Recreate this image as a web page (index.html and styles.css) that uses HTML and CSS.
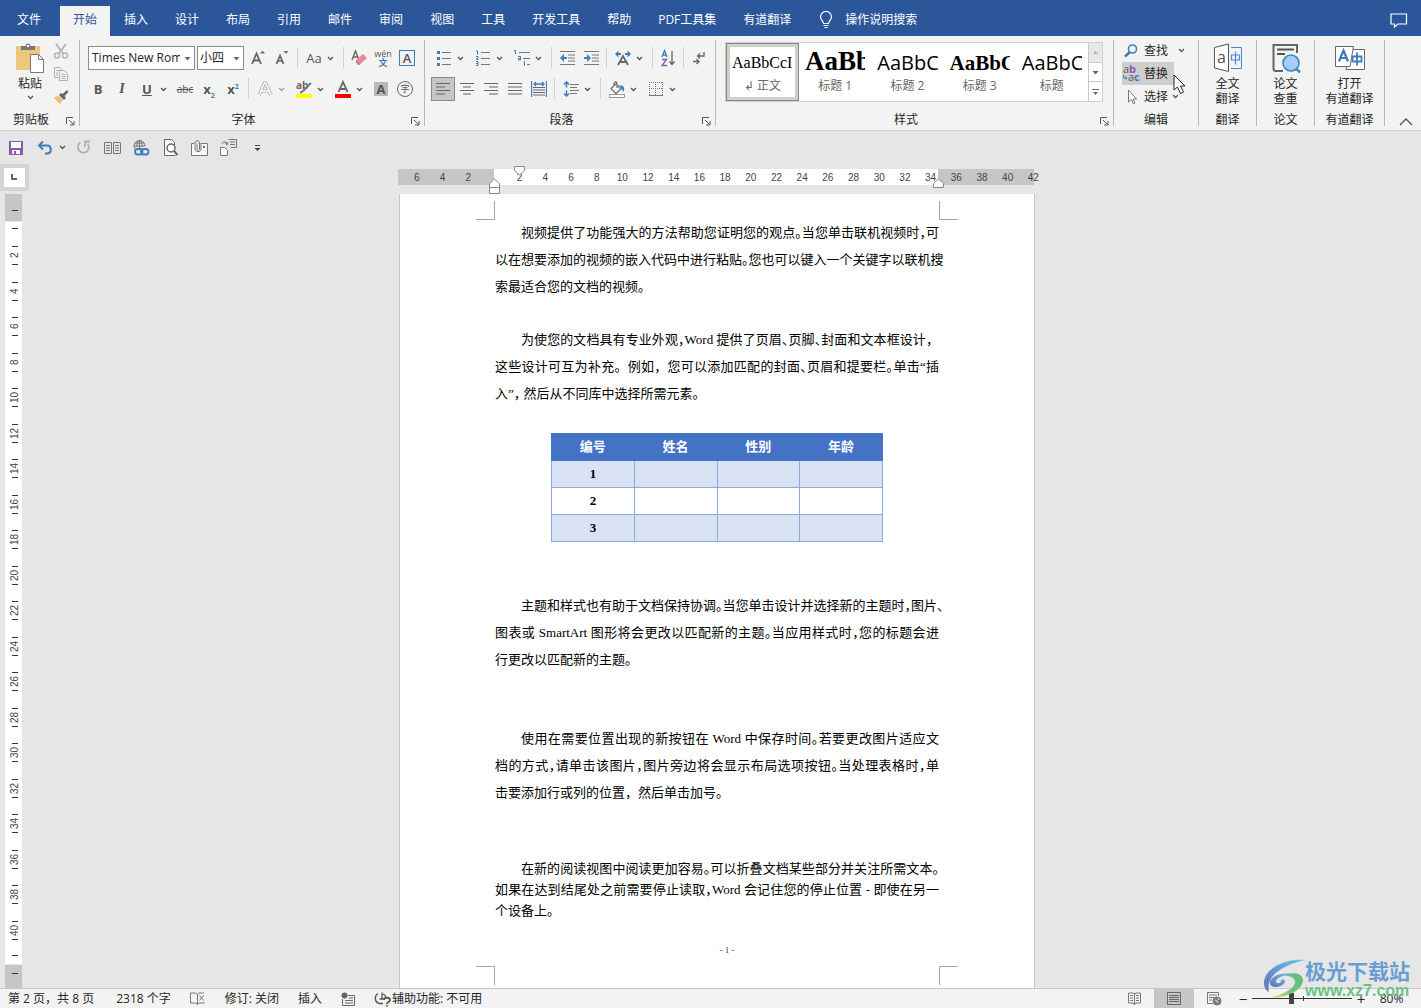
FILE: index.html
```html
<!DOCTYPE html>
<html lang="zh-CN">
<head>
<meta charset="utf-8">
<meta name="viewport" content="width=device-width, initial-scale=1">
<title>文档 - Word</title>
<link rel="stylesheet" href="styles.css">
</head>
<body>
<svg class="defs" aria-hidden="true">
  <symbol id="chev" viewBox="0 0 7 7"><path d="M1 2l2.500 2.500L6 2" fill="none" stroke="#555" stroke-width="1.300"/></symbol>
  <symbol id="launch" viewBox="0 0 9 9"><path d="M.5 7V.5H7M3 3l4 4M8 4v4H4" fill="none" stroke="#555"/></symbol>
  <symbol id="drop" viewBox="0 0 7 7"><path d="M.5 2h6l-3 3.500z" fill="#666"/></symbol>
</svg>

<header class="tabs">
  <nav class="tab-list">
    <button class="tab file">文件</button>
    <button class="tab active">开始</button>
    <button class="tab">插入</button>
    <button class="tab">设计</button>
    <button class="tab">布局</button>
    <button class="tab">引用</button>
    <button class="tab">邮件</button>
    <button class="tab">审阅</button>
    <button class="tab">视图</button>
    <button class="tab">工具</button>
    <button class="tab">开发工具</button>
    <button class="tab">帮助</button>
    <button class="tab">PDF工具集</button>
    <button class="tab">有道翻译</button>
    <button class="tab tell">
      <svg width="14" height="18" viewBox="0 0 14 18" fill="none" stroke="#fff" stroke-width="1.200"><path d="M4.500 12.500c0-2.500-3-3.500-3-6.500a5.500 5.500 0 0 1 11 0c0 3-3 4-3 6.500zM4.500 14.500h5M5.500 16.500h3"/></svg>
      <span>操作说明搜索</span>
    </button>
  </nav>
  <button class="comment" aria-label="批注"><svg width="18" height="15" viewBox="0 0 18 15" fill="none" stroke="#fff" stroke-width="1.200"><path d="M1 1h15.500v10H8l-3.500 3v-3H1z"/></svg></button>
</header>

<section class="ribbon">
  <div class="group clipboard">
    <div class="clip-body">
      <button class="big">
        <svg width="30" height="30" viewBox="0 0 30 30"><path d="M1 3h24v24H1z" fill="#eec77e"/><path d="M6 3h4.500C10.500-.5 15.500-.5 15.500 3H20v4H6z" fill="#777"/><circle cx="13" cy="3" r="1.300" fill="#f3f3f3"/><path d="M15.500 11.500h8l5 5v13h-13z" fill="#fff" stroke="#777"/><path d="M23.500 11.500v5h5" fill="none" stroke="#777"/></svg>
        <span>粘贴</span>
        <svg width="7" height="7"><use href="#chev"/></svg>
      </button>
      <div class="clip-side">
        <button aria-label="剪切"><svg width="16" height="16" viewBox="0 0 16 16" fill="none" stroke="#b5b5b5" stroke-width="1.500"><path d="M3 1l7.500 10M13 1L5.500 11" stroke-width="2"/><circle cx="4" cy="12.500" r="2.500"/><circle cx="12" cy="12.500" r="2.500"/></svg></button>
        <button aria-label="复制"><svg width="16" height="16" viewBox="0 0 16 16" fill="#f3f3f3" stroke="#b5b0b8"><path d="M1.500 1.500h5l3 3v7h-8z"/><path d="M6.500 4.500h5l3 3v7h-8z"/><path d="M3 4.500h3M3 7h2M3 9h2M8.500 8.500h4M8.500 10.500h4M8.500 12.500h4"/></svg></button>
        <button aria-label="格式刷"><svg width="16" height="16" viewBox="0 0 16 16"><path d="M1 8l5-1 4 4-3 4C5 13 2 11 1 8z" fill="#eec077"/><path d="M6 6l5 5 2-2-1.500-2L15.500 3 14 1 9.500 5 8 4z" fill="#666"/></svg></button>
      </div>
    </div>
    <div class="group-foot"><span>剪贴板</span><button aria-label="剪贴板选项"><svg width="9" height="9"><use href="#launch"/></svg></button></div>
  </div>

  <div class="group font">
    <div class="row combos">
      <label class="combo name"><select aria-label="字体"><option>Times New Roman</option></select><svg width="7" height="7"><use href="#drop"/></svg></label>
      <label class="combo size"><select aria-label="字号"><option>小四</option></select><svg width="7" height="7"><use href="#drop"/></svg></label>
      <button class="ico" aria-label="增大字号"><svg width="16" height="18" viewBox="0 0 16 18"><path d="M2 15L6.500 4.500 11 15M3.500 11.500h6" fill="none" stroke="#666" stroke-width="1.800"/><path d="M10 4.500h5L12.500 1.500z" fill="#3f7cb8"/></svg></button>
      <button class="ico" aria-label="减小字号"><svg width="16" height="18" viewBox="0 0 16 18"><path d="M2.500 15L6 6.500 9.500 15M4 12h4" fill="none" stroke="#666" stroke-width="1.700"/><path d="M9.500 2h5L12 5z" fill="#3f7cb8"/></svg></button>
      <i class="sep"></i>
      <button class="ico split"><span class="gl aa">Aa</span><svg width="7" height="7"><use href="#chev"/></svg></button>
      <i class="sep"></i>
      <button class="ico" aria-label="清除格式"><svg width="18" height="18" viewBox="0 0 18 18"><path d="M2 11L5.500 2 9 11M3.500 8h4" fill="none" stroke="#666" stroke-width="1.400"/><path d="M6 11l7-6 4 4-7 6.500H8L6 13z" fill="#e8899b"/><path d="M6 11.500l4 4-1.500.5L6 13.500z" fill="#c76a80"/></svg></button>
      <button class="ico pinyin"><span>wén</span><span class="han">文</span></button>
      <button class="ico" aria-label="字符边框"><span class="gl boxed">A</span></button>
    </div>
    <div class="row">
      <button class="ico"><b class="gl">B</b></button>
      <button class="ico"><i class="gl ital">I</i></button>
      <button class="ico split"><b class="gl under">U</b><svg width="7" height="7"><use href="#chev"/></svg></button>
      <button class="ico"><span class="gl strike">abc</span></button>
      <button class="ico"><b class="gl">x<sub>2</sub></b></button>
      <button class="ico"><b class="gl">x<sup>2</sup></b></button>
      <i class="sep"></i>
      <button class="ico split pale" aria-label="文本效果"><svg class="gl" width="16" height="16" viewBox="0 0 16 16" fill="none"><path d="M2 14L7.500 2h1L14 14M4.500 10h7" stroke="#bbb" stroke-width="3.500"/><path d="M2 14L7.500 2h1L14 14M4.500 10h7" stroke="#fff" stroke-width="1.300"/></svg><svg width="7" height="7"><use href="#chev"/></svg></button>
      <button class="ico split" aria-label="突出显示"><svg class="gl" width="18" height="18" viewBox="0 0 18 18"><text x="1" y="9" font-size="10" font-weight="bold" fill="#666" font-family="Open Sans, sans-serif">ab</text><path d="M16 3L8 11l-3 2" stroke="#777" stroke-width="2" fill="none"/><path d="M1 14h16v4H1z" fill="#ff0"/></svg><svg width="7" height="7"><use href="#chev"/></svg></button>
      <button class="ico split" aria-label="字体颜色"><svg class="gl" width="18" height="18" viewBox="0 0 18 18"><path d="M4.500 12L9 2l4.500 10M6 9h6" fill="none" stroke="#666" stroke-width="1.800"/><path d="M1 14h16v4H1z" fill="red"/></svg><svg width="7" height="7"><use href="#chev"/></svg></button>
      <button class="ico" aria-label="字符底纹"><b class="gl shade">A</b></button>
      <button class="ico" aria-label="带圈字符"><span class="gl ring">字</span></button>
    </div>
    <div class="group-foot"><span>字体</span><button aria-label="字体选项"><svg width="9" height="9"><use href="#launch"/></svg></button></div>
  </div>

  <div class="group para">
    <div class="row">
      <button class="ico split" aria-label="项目符号"><svg class="gl" width="16" height="16" viewBox="0 0 16 16"><path d="M6 2.500h9M6 8.500h9M6 14.500h9" stroke="#777"/><path d="M1 1h3v3H1zM1 7h3v3H1zM1 13h3v3H1z" fill="#3f7cb8"/></svg><svg width="7" height="7"><use href="#chev"/></svg></button>
      <button class="ico split" aria-label="编号"><svg class="gl" width="16" height="16" viewBox="0 0 16 16"><path d="M6 2.500h9M6 8.500h9M6 14.500h9" stroke="#777"/><path d="M1 1h1.500v3.500M1 6.500h2v1.500L1 9.500h2.500M1 11.500h2v4H1M1 13.500h2" fill="none" stroke="#3f7cb8"/></svg><svg width="7" height="7"><use href="#chev"/></svg></button>
      <button class="ico split" aria-label="多级列表"><svg class="gl" width="18" height="18" viewBox="0 0 18 18"><path d="M6 3.500h11M10 9.500h7M14 15.500h3" stroke="#777"/><path d="M1 1.500h1.500V5M5 7.500h2.500V11H5.500V9.500h2M11.500 11.500v1M10.500 13.500h1V17" fill="none" stroke="#3f7cb8"/></svg><svg width="7" height="7"><use href="#chev"/></svg></button>
      <i class="sep"></i>
      <button class="ico" aria-label="减少缩进"><svg width="17" height="14" viewBox="0 0 17 14"><path d="M1 .5h15M9 4h7M9 7h7M9 10h7M1 13.500h15" stroke="#777"/><path d="M8 6H5V3L1 7l4 4V8h3z" fill="#3f7cb8"/></svg></button>
      <button class="ico" aria-label="增加缩进"><svg width="17" height="14" viewBox="0 0 17 14"><path d="M1 .5h15M9 4h7M9 7h7M9 10h7M1 13.500h15" stroke="#777"/><path d="M1 6h3V3l4 4-4 4V8H1z" fill="#3f7cb8"/></svg></button>
      <i class="sep"></i>
      <button class="ico split" aria-label="中文版式"><svg class="gl" width="18" height="16" viewBox="0 0 18 16"><path d="M4 15L9 6l5 9M6 12h6" fill="none" stroke="#666" stroke-width="1.800"/><path d="M1 4l3.500-3.500V3H7v2H4.500v2.500zM17 4L13.500.5V3H11v2h2.500v2.500z" fill="#3f7cb8"/></svg><svg width="7" height="7"><use href="#chev"/></svg></button>
      <i class="sep"></i>
      <button class="ico" aria-label="排序"><svg width="16" height="18" viewBox="0 0 16 18" fill="none" stroke-width="1.300"><path d="M2 8l2.500-6.500L7 8M3 6h3" stroke="#3f7cb8"/><path d="M2 10.500h4.500L2 16.500h5" stroke="#9055b0"/><path d="M12 2v13M9.500 12.500L12 15.500l2.500-3" stroke="#666"/></svg></button>
      <i class="sep"></i>
      <button class="ico" aria-label="显示编辑标记"><svg width="14" height="16" viewBox="0 0 14 16" fill="none" stroke="#666" stroke-width="1.300"><path d="M12 2v4H5.500M8 3.500L5.500 6 8 8.500M1 11.500h6M4.500 9L7 11.500 4.500 14"/></svg></button>
    </div>
    <div class="row">
      <button class="ico on" aria-label="左对齐"><svg width="14" height="12" viewBox="0 0 14 12"><path d="M0 .5h14M0 4h9M0 7.500h14M0 11h9" stroke="#666"/></svg></button>
      <button class="ico" aria-label="居中"><svg width="14" height="12" viewBox="0 0 14 12"><path d="M0 .5h14M3 4h8M0 7.500h14M3 11h8" stroke="#666"/></svg></button>
      <button class="ico" aria-label="右对齐"><svg width="14" height="12" viewBox="0 0 14 12"><path d="M0 .5h14M5 4h9M0 7.500h14M5 11h9" stroke="#666"/></svg></button>
      <button class="ico" aria-label="两端对齐"><svg width="14" height="12" viewBox="0 0 14 12"><path d="M0 .5h14M0 4h14M0 7.500h14M0 11h14" stroke="#666"/></svg></button>
      <button class="ico" aria-label="分散对齐"><svg width="16" height="16" viewBox="0 0 16 16" fill="none"><path d="M.5 0v16M15.500 0v16M3 3h10M5 1L3 3l2 2M11 1l2 2-2 2" stroke="#3f7cb8" stroke-width="1.300"/><path d="M2 6.500h12M2 9h12M2 11.500h12M2 14h12" stroke="#666"/></svg></button>
      <i class="sep"></i>
      <button class="ico split" aria-label="行距"><svg class="gl" width="16" height="16" viewBox="0 0 16 16" fill="none"><path d="M7 3.500h9M7 6.500h7M7 9.500h9M7 12.500h7" stroke="#777"/><path d="M3.500 1v5.500M1 3.500L3.500 1 6 3.500M3.500 9.500V15M1 12.500L3.500 15 6 12.500" stroke="#3f7cb8" stroke-width="1.500"/></svg><svg width="7" height="7"><use href="#chev"/></svg></button>
      <i class="sep"></i>
      <button class="ico split" aria-label="底纹"><svg class="gl" width="18" height="17" viewBox="0 0 18 17" fill="none"><path d="M3 7.500L8 3l5 5-5 4.500zM6 6V2.500C6 .5 9 .5 9 2.500V7" stroke="#777" stroke-width="1.300"/><path d="M11 4l4 1c1.500 2 1.500 4 .5 6-1-1-1-3-2.500-4z" fill="#3f7cb8"/><path d="M1.500 13.500h15v3h-15z" stroke="#999" fill="#fff"/></svg><svg width="7" height="7"><use href="#chev"/></svg></button>
      <button class="ico split" aria-label="边框"><svg class="gl" width="14" height="14" viewBox="0 0 14 14" fill="none" stroke="#777"><path d="M0 .5h14M.5 0v13M13.500 0v13M6.500 0v13M0 6.500h14" stroke-dasharray="1 1"/><path d="M0 13.500h14"/></svg><svg width="7" height="7"><use href="#chev"/></svg></button>
    </div>
    <div class="group-foot"><span>段落</span><button aria-label="段落选项"><svg width="9" height="9"><use href="#launch"/></svg></button></div>
  </div>

  <div class="group styles">
    <div class="gallery">
      <button class="style sel"><span class="pv body">AaBbCcI</span><span class="nm">↲ 正文</span></button>
      <button class="style"><span class="pv h1">AaBb</span><span class="nm">标题 1</span></button>
      <button class="style"><span class="pv h2">AaBbC</span><span class="nm">标题 2</span></button>
      <button class="style"><span class="pv h3">AaBbC</span><span class="nm">标题 3</span></button>
      <button class="style"><span class="pv h2">AaBbC</span><span class="nm">标题</span></button>
      <div class="scroll">
        <button class="off" aria-label="上一行"><svg width="7" height="7" viewBox="0 0 7 7"><path d="M1 5h5L3.500 2z" fill="#b5b5b5"/></svg></button>
        <button aria-label="下一行"><svg width="7" height="7"><use href="#drop"/></svg></button>
        <button aria-label="其他"><svg width="7" height="8" viewBox="0 0 7 8"><path d="M0 1.500h7" stroke="#666"/><path d="M1 4h5L3.500 7z" fill="#666"/></svg></button>
      </div>
    </div>
    <div class="group-foot"><span>样式</span><button aria-label="样式选项"><svg width="9" height="9"><use href="#launch"/></svg></button></div>
  </div>

  <div class="group edit">
    <div class="edit-list">
      <button><svg width="16" height="16" viewBox="0 0 16 16" fill="none" stroke="#3f7cb8"><circle cx="9.500" cy="6" r="4" stroke-width="1.600"/><path d="M7 9l-5 4.500" stroke-width="2.500"/></svg><span>查找</span><svg class="far" width="7" height="7"><use href="#chev"/></svg></button>
      <button class="hot"><svg width="18" height="18" viewBox="0 0 18 18" font-family="Open Sans, sans-serif" font-size="11"><text x="1" y="8" fill="#555">a</text><text x="7" y="8" fill="#9055b0" font-weight="bold">b</text><text x="6" y="16" fill="#555">a</text><text x="12" y="16" fill="#3f7cb8" font-weight="bold">c</text><path d="M1.500 10v3H5M3.500 11.500L5 13l-1.500 1.500" fill="none" stroke="#3f7cb8"/></svg><span>替换</span></button>
      <button><svg width="14" height="16" viewBox="0 0 14 16"><path d="M4.500 1v12l3-2.500 2 4.500 1.500-1-2-4h3.500z" fill="#fff" stroke="#777"/></svg><span>选择</span><svg width="7" height="7"><use href="#chev"/></svg></button>
    </div>
    <div class="group-foot plain"><span>编辑</span></div>
    <svg class="pointer" width="14" height="21" viewBox="0 0 14 21"><path d="M1 1v15l3.500-3 3 6.500 3-1.500-3-6H12z" fill="#fff" stroke="#223"/></svg>
  </div>

  <div class="group addin">
    <button class="big">
      <svg width="30" height="30" viewBox="0 0 30 30"><path d="M1.500 4.500L15.500 1v27.500L1.500 25z" fill="#fff" stroke="#555"/><path d="M18 4.500h10.500v21H18" fill="none" stroke="#4d86d8"/><text x="4" y="20" font-size="16" fill="#555" font-family="Open Sans, sans-serif">a</text><path d="M18.500 12h8v5h-8zM22.500 8.500v13" fill="none" stroke="#4d86d8" stroke-width="1.200"/></svg>
      <span>全文<br>翻译</span>
    </button>
    <div class="group-foot plain"><span>翻译</span></div>
  </div>
  <div class="group addin">
    <button class="big">
      <svg width="30" height="30" viewBox="0 0 30 30" fill="none"><path d="M12 28H5a2.500 2.500 0 0 1-2.500-2.500V2H26v8" stroke="#666" stroke-width="2"/><path d="M6 6.500h17M6 11h8" stroke="#555" stroke-width="2"/><circle cx="20" cy="20" r="8" fill="#a4cdf8" stroke="#3d88bd" stroke-width="1.600"/><path d="M25 25.500l4 4" stroke="#3d88bd" stroke-width="2.500"/></svg>
      <span>论文<br>查重</span>
    </button>
    <div class="group-foot plain"><span>论文</span></div>
  </div>
  <div class="group addin wide">
    <button class="big">
      <svg width="30" height="30" viewBox="0 0 30 30" fill="none"><path d="M15 6.500h14.500v20H11z" fill="#fff" stroke="#666"/><path d="M.5 3.500h18l-3.500 20H.5z" fill="#fff" stroke="#666"/><path d="M4 18.500L8.500 7.500 13 18.500M5.500 15h6" stroke="#3f7cb8" stroke-width="2.200"/><path d="M17.500 13.500h9v5h-9zM22 9.500v13" stroke="#3f7cb8" stroke-width="1.800"/></svg>
      <span>打开<br>有道翻译</span>
    </button>
    <div class="group-foot plain"><span>有道翻译</span></div>
  </div>
  <button class="collapse" aria-label="折叠功能区"><svg width="14" height="8" viewBox="0 0 14 8" fill="none" stroke="#555" stroke-width="1.300"><path d="M1 7l6-6 6 6"/></svg></button>
</section>

<div class="quick">
  <button aria-label="保存"><svg width="14" height="14" viewBox="0 0 14 14"><path d="M0 0h14v14H0z" fill="#8e56ae"/><path d="M2 1h10v6H2zM3 9h8v4H3z" fill="#fff"/><path d="M5 10h2v3H5z" fill="#8e56ae"/></svg></button>
  <button aria-label="撤消"><svg width="16" height="14" viewBox="0 0 16 14" fill="none" stroke="#3f7cb8" stroke-width="2"><path d="M2 4.500h8c5 0 5 8 0 8H8M6 .5l-4 4 4 4"/></svg></button>
  <button class="mini" aria-label="撤消列表"><svg width="7" height="7"><use href="#chev"/></svg></button>
  <button aria-label="重复"><svg width="15" height="15" viewBox="0 0 15 15" fill="none" stroke="#b0b0b0" stroke-width="1.800"><path d="M4.500 2.500a5.500 5.500 0 1 0 7 1M9 7V1.500h5"/></svg></button>
  <button aria-label="并排"><svg width="17" height="12" viewBox="0 0 17 12" fill="none" stroke="#777"><path d="M.5.5h7v11h-7zM9.500.5h7v11h-7zM2 3.500h4M2 6h4M2 8.500h4M11 3.500h4M11 6h4M11 8.500h4"/></svg></button>
  <button aria-label="链接"><svg width="17" height="17" viewBox="0 0 17 17" fill="none"><path d="M1 7a5.500 5.500 0 0 1 11 0M1 7h11M2 4h9M6.500 1v8M4 8C3.500 5 4 3 6.500 1 9 3 9.500 5 9 8M1 7l1 3" stroke="#777"/><rect x="2" y="10" width="7.500" height="5.500" rx="2.700" stroke="#3f7cb8" stroke-width="1.800"/><rect x="8" y="10" width="7.500" height="5.500" rx="2.700" stroke="#3f7cb8" stroke-width="1.800"/></svg></button>
  <button aria-label="打印预览"><svg width="15" height="17" viewBox="0 0 15 17" fill="none" stroke="#666"><path d="M12.500 16.500H1.500V.5h7l3 3V6" fill="#fff"/><circle cx="8" cy="9" r="4" stroke-width="1.500"/><path d="M11 12l3.500 4" stroke-width="2"/></svg></button>
  <button aria-label="附件"><svg width="17" height="16" viewBox="0 0 17 16" fill="none" stroke="#777"><path d="M3 3.500H.5v12h16v-12H10" fill="#f8f8f8"/><path d="M4 9V3c0-3 4.500-3 4.500 0v6c0 2-2.500 2-2.500 0V3.500M10 3v6c0 4-6 3-6 0"/><path d="M12 6h2v2h-2z" fill="#3f7cb8" stroke="none"/></svg></button>
  <button aria-label="转换"><svg width="17" height="17" viewBox="0 0 17 17" fill="none" stroke="#777"><path d="M8.500.5h8v8H11M10 3h5M10 5.500h5"/><path d="M.5 8.500h4l3 3v5h-7z" fill="#fff"/><path d="M2 5c1-3 4-3 5 0M5 3.500L7 6l1-3" stroke="#3f7cb8"/></svg></button>
  <button aria-label="自定义快速访问工具栏"><svg width="7" height="8" viewBox="0 0 7 8"><path d="M1 1.500h5" stroke="#444"/><path d="M.5 4h6l-3 3z" fill="#444"/></svg></button>
</div>

<main class="work">
  <aside class="side">
    <button class="corner" aria-label="制表位"><svg width="7" height="7" viewBox="0 0 7 7"><path d="M1 0v5h5" fill="none" stroke="#666" stroke-width="2"/></svg></button>
    <div class="vruler">
      <div class="vend top"><i></i></div>
      <div class="vmid">
        <i></i>
        <ol>
          <li><span>2</span></li><li><span>4</span></li><li><span>6</span></li><li><span>8</span></li><li><span>10</span></li><li><span>12</span></li><li><span>14</span></li><li><span>16</span></li><li><span>18</span></li><li><span>20</span></li><li><span>22</span></li><li><span>24</span></li><li><span>26</span></li><li><span>28</span></li><li><span>30</span></li><li><span>32</span></li><li><span>34</span></li><li><span>36</span></li><li><span>38</span></li><li><span>40</span></li>
        </ol>
        <i></i>
      </div>
      <div class="vend bottom"><i></i></div>
    </div>
  </aside>
  <div class="canvas">
    <div class="hruler">
      <ol>
        <li>6</li><li>4</li><li>2</li><li></li><li>2</li><li>4</li><li>6</li><li>8</li><li>10</li><li>12</li><li>14</li><li>16</li><li>18</li><li>20</li><li>22</li><li>24</li><li>26</li><li>28</li><li>30</li><li>32</li><li>34</li><li>36</li><li>38</li><li>40</li><li>42</li>
      </ol>
      <svg class="mark first" width="11" height="10" viewBox="0 0 11 10"><path d="M.5.5h10v4L5.500 9l-5-4.500z" fill="#fff" stroke="#888"/></svg>
      <svg class="mark hang" width="11" height="16" viewBox="0 0 11 16"><path d="M.5 15.500v-10L5.500 1l5 4.500v10zM.5 9.500h10" fill="#fff" stroke="#888"/></svg>
      <svg class="mark right" width="11" height="10" viewBox="0 0 11 10"><path d="M.5 9.500v-4L5.500 1l5 4.500v4z" fill="#fff" stroke="#888"/></svg>
    </div>
    <article class="page">
      <div class="crops head"><i></i><i></i></div>
      <div class="text">
        <p><span class="ln in">视频提供了功能强大的方法帮助您证明您的观点<em>。</em>当您单击联机视频时<em>，</em>可</span><span class="ln">以在想要添加的视频的嵌入代码中进行粘贴<em>。</em>您也可以键入一个关键字以联机搜</span><span class="ln end">索最适合您的文档的视频。</span></p>
        <p><span class="ln in">为使您的文档具有专业外观<em>，</em>Word 提供了页眉<em>、</em>页脚<em>、</em>封面和文本框设计，</span><span class="ln">这些设计可互为补充。例如，您可以添加匹配的封面<em>、</em>页眉和提要栏<em>。</em>单击“插</span><span class="ln end">入”<em>，</em> 然后从不同库中选择所需元素。</span></p>
        <table>
          <thead><tr><th>编号</th><th>姓名</th><th>性别</th><th>年龄</th></tr></thead>
          <tbody>
            <tr><th>1</th><td></td><td></td><td></td></tr>
            <tr><th>2</th><td></td><td></td><td></td></tr>
            <tr><th>3</th><td></td><td></td><td></td></tr>
          </tbody>
        </table>
        <p><span class="ln in">主题和样式也有助于文档保持协调<em>。</em>当您单击设计并选择新的主题时<em>，</em>图片<em>、</em></span><span class="ln">图表或 SmartArt 图形将会更改以匹配新的主题<em>。</em>当应用样式时<em>，</em>您的标题会进</span><span class="ln end">行更改以匹配新的主题。</span></p>
        <p><span class="ln in">使用在需要位置出现的新按钮在 Word 中保存时间<em>。</em>若要更改图片适应文</span><span class="ln">档的方式<em>，</em>请单击该图片<em>，</em>图片旁边将会显示布局选项按钮<em>。</em>当处理表格时<em>，</em>单</span><span class="ln end">击要添加行或列的位置，然后单击加号。</span></p>
        <p class="tight"><span class="ln in">在新的阅读视图中阅读更加容易<em>。</em>可以折叠文档某些部分并关注所需文本<em>。</em></span><span class="ln">如果在达到结尾处之前需要停止读取<em>，</em>Word 会记住您的停止位置 - 即使在另一</span><span class="ln end">个设备上。</span></p>
      </div>
      <footer class="folio">- 1 -</footer>
      <div class="crops foot"><i></i><i></i></div>
    </article>
  </div>
</main>

<footer class="status">
  <div class="st-left">
    <span class="s-page">第 2 页，共 8 页</span>
    <span>2318 个字</span>
    <svg width="16" height="13" viewBox="0 0 16 13" fill="none" stroke="#777"><path d="M7.500 12.500L5.500 11h-5V1h5l2 1.500zM7.500 2.500L9 1h5M7.500 12.500L9 11h5v-1M9.500 3.500l4 5M13.500 3.500l-4 5"/></svg>
    <span>修订: 关闭</span>
    <span>插入</span>
    <svg width="14" height="14" viewBox="0 0 14 14"><path d="M7 3.500h6.500v10h-12V7M4 8.500h8M4 11h8M8 6h4" fill="none" stroke="#666"/><circle cx="3.500" cy="3.500" r="3" fill="#666"/></svg>
    <span class="acc"><svg width="17" height="16" viewBox="0 0 17 16" fill="none" stroke="#555" stroke-width="1.300"><path d="M4 2.500C0 5 .5 11 5 12.500h4M5.500 8h5M8 1.500V8M9 3a6 6 0 0 1 3 3"/><path d="M10 9c0-3 6-3 6 0 0 2-3 2-3 4M13 14v1.500" stroke-width="1.800"/></svg>辅助功能: 不可用</span>
  </div>
  <div class="st-right">
    <button aria-label="阅读视图"><svg width="13" height="13" viewBox="0 0 13 13" fill="none" stroke="#777"><path d="M.5 1h4.500l1.500 1L8 1h4.500v10H8l-1.500 1.500L5 11H.5zM6.500 1v12M2 3.500h3M2 6h3M2 8.500h3M8 3.500h3M8 6h3M8 8.500h3"/></svg></button>
    <button class="on" aria-label="页面视图"><svg width="14" height="13" viewBox="0 0 14 13" fill="none" stroke="#666"><path d="M.5.5h13v12H.5zM2 3.500h10M2 5.500h10M2 7.500h10M2 9.500h10"/></svg></button>
    <button aria-label="Web 版式"><svg width="15" height="14" viewBox="0 0 15 14" fill="none" stroke="#777"><path d="M6 11.500H.5V.5h11V4M2 3h8M2 5.500h5M2 8h3"/><circle cx="10" cy="9" r="4" fill="#777"/><path d="M8 8l2 1 1 2M11 6l1 2" stroke="#eee"/></svg></button>
    <button class="zm" aria-label="缩小">−</button>
    <label class="zoom"><input type="range" min="0" max="100" value="39" aria-label="显示比例"></label>
    <button class="zm" aria-label="放大">+</button>
    <span class="pct">80%</span>
  </div>
</footer>

<div class="badge">
  <svg width="42" height="40" viewBox="0 0 42 40">
    <defs><linearGradient id="ba" x1="0" y1="1" x2="1" y2="0"><stop offset="0" stop-color="#5467b4"/><stop offset="1" stop-color="#5dc3ee"/></linearGradient><linearGradient id="bb" x1="0" y1="1" x2="1" y2="0"><stop offset="0" stop-color="#e4e25d"/><stop offset=".5" stop-color="#5fbf6e"/><stop offset="1" stop-color="#4fb874"/></linearGradient></defs>
    <path d="M42 1C22-1 1 10 1 24c0 4 2 8 5 9-3-12 6-25 36-32z" fill="url(#ba)"/>
    <path d="M20 16c6-3 20-3 20 5 0 9-14 18-34 18 14-3 27-10 26-17-1-4-6-5-12-6z" fill="url(#bb)"/>
    <path d="M31 16c-10-4-24 1-24 8 0 6 12 5 15-1 1-3-3-3-6-2 5 0 1 4-2 3-4-3 6-10 17-8z" fill="url(#ba)"/>
  </svg>
  <div><strong>极光下载站</strong><span>www.xz7.com</span></div>
</div>
</body>
</html>
```
FILE: styles.css
```css
* { box-sizing: border-box; }
body {
  margin: 0;
  height: 100vh;
  display: flex;
  flex-direction: column;
  overflow: hidden;
  background: #e6e6e6;
  color: #262626;
  font: 12px/14px "Open Sans", "Noto Sans CJK SC", sans-serif;
}
button {
  margin: 0;
  padding: 0;
  border: 0;
  background: none;
  color: inherit;
  font: inherit;
  display: flex;
  align-items: center;
  justify-content: center;
  white-space: nowrap;
}
svg { display: block; flex: none; }
ol { margin: 0; padding: 0; list-style: none; }
.defs { position: absolute; width: 0; height: 0; }

/* title tabs */
.tabs {
  display: flex;
  justify-content: space-between;
  height: 36px;
  flex: none;
  background: #2b579a;
  color: #fff;
}
.tab-list { display: flex; gap: 1px; padding: 6px 0 0 4px; }
.tab { padding: 0 13px 2px; }
.tab.file { margin-right: 5px; }
.tab.active { background: #f3f3f3; color: #2b579a; }
.tab.tell { gap: 12px; padding-left: 14px; }
.comment { padding: 4px 13px 0 0; }

/* ribbon */
.ribbon {
  display: flex;
  flex: none;
  height: 95px;
  padding: 4px 0;
  background: #f3f3f3;
  border-bottom: 1px solid #d0d0d0;
}
.group {
  position: relative;
  display: flex;
  flex-direction: column;
  flex: none;
  border-right: 1px solid #b8b8b8;
}
.group-foot { display: flex; margin-top: auto; text-align: center; line-height: 16px; height: 14px; }
.group-foot span { flex: 1; }
.group-foot button { width: 17px; align-items: flex-end; }
.clipboard { width: 80px; }
.clip-body { display: flex; padding: 3px 0 0 15px; }
.big { flex-direction: column; justify-content: flex-start; line-height: 15px; }
.clipboard .big { gap: 3px; width: 30px; }
.clip-side { display: flex; flex-direction: column; gap: 7px; padding-left: 8px; }
.font { width: 345px; padding: 6px 0 0 6px; }
.para { width: 291px; padding: 6px 0 0 6px; }
.font .group-foot, .para .group-foot { margin-left: -6px; }
.row { display: flex; height: 24px; margin-bottom: 7px; }
.combos { padding-left: 2px; }
.combo { position: relative; display: flex; height: 24px; margin-right: 2px; }
.combo.name { width: 107px; }
.combo.size { width: 47px; }
.combo select {
  appearance: none;
  width: 100%;
  margin: 0;
  padding: 0 14px 0 3px;
  border: 1px solid #8c8c8c;
  border-radius: 0;
  background: #fff;
  color: #222;
  font: 12px/18px "Open Sans", "Noto Sans CJK SC", sans-serif;
}
.combo.size select { padding-left: 2px; }
.combo svg { position: absolute; right: 4px; top: 9px; pointer-events: none; }
.ico { width: 24px; height: 24px; color: #555; }
.ico.split { width: 39px; justify-content: flex-start; }
.ico.split .gl { margin: 0 auto; }
.ico.split svg:last-child { margin-right: 6px; }
.ico.on { background: #c6c6c6; border: 1px solid #8a8a8a; }
.ico.pale svg:last-child { opacity: 0.5; }
.gl { font-size: 13px; line-height: 16px; }
.gl.ital { font-family: "Liberation Serif", serif; font-size: 14px; font-weight: bold; }
.gl.under { text-decoration: underline; }
.gl.strike { font-size: 10px; text-decoration: line-through; }
.gl sub, .gl sup { color: #3f7cb8; font-size: 7px; line-height: 0; }
.gl.boxed { width: 16px; border: 1px solid #3f7cb8; font-weight: 600; line-height: 14px; }
.gl.shade { width: 14px; background: #b8b8b8; line-height: 14px; }
.gl.ring { width: 16px; border: 1px solid #666; border-radius: 50%; font-size: 9px; line-height: 14px; }
.pinyin { flex-direction: column; font-size: 9px; line-height: 9px; }
.pinyin .han { color: #3f7cb8; font-weight: bold; }
.sep { flex: none; width: 1px; height: 21px; margin: 1px 3px; background: #d2d2d2; }

.styles { flex: 0 1 398px; min-width: 0; padding: 2px 10px 0 9px; }
.gallery { display: flex; height: 60px; background: #fff; border: 1px solid #d0d0d0; overflow: hidden; }
.style { display: flex; flex: 1; flex-direction: column; align-items: stretch; justify-content: flex-start; min-width: 0; padding: 8px 6px 0; }
.style.sel { flex: none; width: 73px; padding: 7px 5px 0; border: 1px solid #8a8a84; outline: 3px solid #cfcfcb; outline-offset: -4px; }
.pv { height: 24px; overflow: hidden; color: #000; text-align: left; line-height: 24px; }
.pv.body { font: 16px/24px "Liberation Serif", serif; }
.pv.h1 { font: bold 27px/20px "Liberation Serif", serif; }
.pv.h2 { font-size: 20px; }
.pv.h3 { font: bold 21px/24px "Liberation Serif", serif; }
.nm { padding-top: 4px; color: #666; }
.scroll { display: flex; flex-direction: column; width: 14px; border-left: 1px solid #c8c8c8; }
.scroll button { flex: 1; border-bottom: 1px solid #c8c8c8; }
.scroll button:last-child { border-bottom: 0; }
.scroll .off { background: #e8e8e8; }
.styles .group-foot { margin-left: -9px; margin-right: -10px; }

.edit { width: 85px; }
.edit-list { display: flex; flex-direction: column; align-items: flex-start; padding: 0 0 0 8px; margin-top: -1px; }
.edit-list button { height: 23px; padding-right: 6px; gap: 4px; }
.edit-list button svg:first-child { width: 18px; }
.edit-list .hot { background: #cecece; }
.edit-list .far { margin-left: 6px; }
.pointer { position: absolute; left: 59px; top: 34px; }
.addin { width: 58px; }
.addin.wide { width: 70px; }
.addin .big { padding-top: 3px; gap: 3px; }

.collapse { margin: auto 8px 0 auto; }

/* quick access toolbar */
.quick { display: flex; flex: none; height: 33px; padding-left: 1px; }
.quick button { width: 29px; }
.quick .mini { width: 10px; justify-content: flex-start; }

/* workspace */
.work { display: flex; flex: 1; min-height: 0; overflow: hidden; }
.side { display: flex; flex-direction: column; width: 29px; flex: none; }
.corner { flex: none; width: 29px; height: 27px; border: 4px solid #d4d4d4; background: #fff; }
.vruler { display: flex; flex-direction: column; flex: 1; min-height: 0; width: 17px; margin: 3px 0 0 5px; overflow: hidden; }
.vend { display: flex; flex: none; height: 27px; padding: 16px 0 0 7px; background: #c6c6c6; }
.vend.bottom { flex: 1; padding-top: 8px; }
.vruler i { flex: none; width: 6px; height: 1px; background: #333; }
.vmid { display: flow-root; flex: none; margin: 1px 0; background: #fff; }
.vmid > i { display: block; margin: 6px 0 9px 7px; }
.vmid > i:last-child { margin: 7px 0 8px 7px; }
.vmid ol { display: flex; flex-direction: column; height: 710px; }
.vmid li { display: flex; flex: 1; flex-direction: column; align-items: center; justify-content: center; padding-left: 3px; }
.vmid li::before, .vmid li::after { content: ""; width: 6px; height: 1px; background: #333; }
.vmid li span { display: flex; align-items: center; justify-content: center; height: 17px; writing-mode: vertical-rl; transform: rotate(180deg); font: 10px/10px "Liberation Sans", sans-serif; color: #444; }

.canvas { display: flex; flex: 1; flex-direction: column; align-items: center; padding: 5px 16px 0 0; }
.hruler {
  position: relative;
  flex: none;
  width: 636px;
  height: 16px;
  margin-right: 2px;
  background: linear-gradient(90deg, #c6c6c6 96px, #fff 96px, #fff 540px, #c6c6c6 540px);
}
.hruler ol { display: flex; margin: 0 -12px 0 6px; }
.hruler li { flex: 1 1 0; text-align: center; font: 10px/17px "Liberation Sans", sans-serif; color: #444; }
.mark { position: absolute; }
.mark.first { left: 116px; top: -3px; }
.mark.hang { left: 91px; top: 9px; }
.mark.right { left: 535px; top: 9px; }

.page {
  display: flex;
  flex-direction: column;
  flex: 1;
  width: 636px;
  margin-top: 9px;
  background: #fff;
  border: 1px solid #c6c6c6;
  border-width: 0 1px;
}
.crops { display: flex; justify-content: space-between; flex: none; padding: 0 76px; }
.crops i { width: 19px; height: 19px; border: 0 solid #a6a6a6; }
.crops.head { margin-top: 7px; }
.head i:first-child { border-width: 0 1px 1px 0; }
.head i:last-child { border-width: 0 0 1px 1px; }
.foot i:first-child { border-width: 1px 1px 0 0; }
.foot i:last-child { border-width: 1px 0 0 1px; }
.crops.foot { margin-top: 8px; }
.text { margin-top: -1px; padding: 0 95px; color: #000; font: 13px/27px "Liberation Serif", "Noto Sans CJK SC", serif; }
.text p { margin: 0 0 26px; }
.ln { display: block; white-space: nowrap; text-align-last: justify; }
.ln.in { padding-left: 26px; }
.ln.end { text-align-last: left; }
.ln em { font-style: normal; font-feature-settings: "halt"; }
.text table { width: 332px; margin: 0 auto 50px; border-collapse: collapse; table-layout: fixed; }
.text table + p, .text table + p + p { margin-bottom: 52px; }
.text .tight { margin: 0; line-height: 21px; }
table th, table td { height: 27px; padding: 0; border: 1px solid #8eaadb; line-height: 26px; }
thead th { background: #4472c4; border-color: #4472c4; color: #fff; }
tbody tr:nth-child(odd) { background: #d9e2f3; }
.folio { margin-top: 21px; padding-left: 20px; text-align: center; font: 9px/16px "Liberation Serif", serif; color: #444; }

/* status bar */
.status {
  display: flex;
  justify-content: space-between;
  flex: none;
  height: 20px;
  background: #f3f3f3;
  border-top: 1px solid #c6c6c6;
}
.st-left, .st-right { display: flex; align-items: center; }
.st-left { gap: 19px; padding-left: 8px; }
.s-page { margin-right: 3px; }
.acc { display: flex; align-items: center; gap: 1px; }
.st-right > button { width: 40px; height: 19px; }
.st-right > .on { background: #c6c6c6; }
.st-right > .zm { width: 18px; font-size: 15px; }
.zoom { display: flex; width: 100px; }
.zoom input { appearance: none; width: 100%; height: 14px; margin: 0; background: linear-gradient(#333, #333) 51px 50% / 1px 5px no-repeat, linear-gradient(#333, #333) 0 50% / 100% 1px no-repeat; }
.zoom input::-webkit-slider-thumb { appearance: none; width: 5px; height: 11px; background: #444; }
.pct { width: 51px; padding-right: 8px; text-align: center; }

/* site badge over the window */
.badge { position: absolute; right: 11px; bottom: 9px; display: flex; align-items: center; pointer-events: none; opacity: 0.9; }
.badge div { display: flex; flex-direction: column; }
.badge strong { color: #5b97d0; font-size: 21px; line-height: 24px; }
.badge span { color: #5cc07c; font: bold 16px/16px "Liberation Sans", sans-serif; }
```
